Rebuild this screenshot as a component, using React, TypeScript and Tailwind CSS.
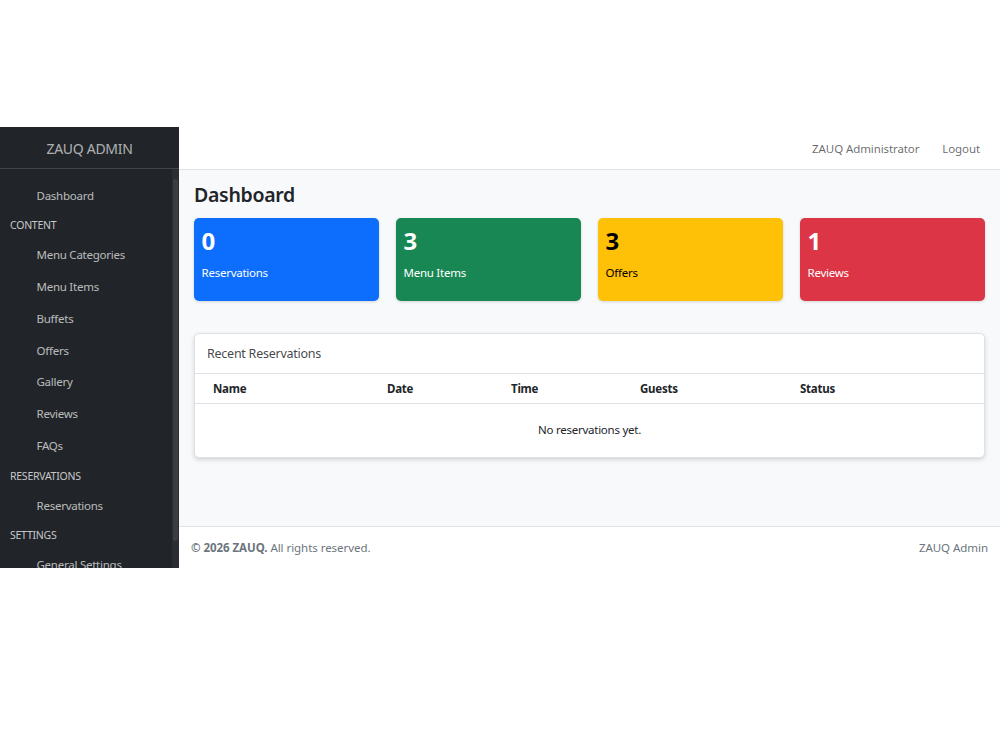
const font = "font-['Noto_Sans','Open_Sans',sans-serif]";

const stats = [
  { value: '0', label: 'Reservations', bg: 'bg-[#0d6efd]', text: 'text-white' },
  { value: '3', label: 'Menu Items', bg: 'bg-[#198754]', text: 'text-white' },
  { value: '3', label: 'Offers', bg: 'bg-[#ffc107]', text: 'text-black' },
  { value: '1', label: 'Reviews', bg: 'bg-[#dc3545]', text: 'text-white' },
];

function NavItem({ label }: { label: string }) {
  return <a className="block h-[31.75px] pl-[36.5px] leading-[31.75px] text-[11.5px] text-[#ffffffb3] whitespace-nowrap">{label}</a>;
}

function NavHeading({ label }: { label: string }) {
  return <div className="h-[28px] pl-[10px] leading-[28px] text-[10.5px] text-[#ffffffbf] uppercase whitespace-nowrap">{label}</div>;
}

function Sidebar() {
  return (
    <aside className="w-[179px] shrink-0 bg-[#212529] flex flex-col">
      <div className="h-[42px] shrink-0 border-b border-[#ffffff26] flex items-center justify-center pt-[2px] text-[14px] tracking-[-0.3px] text-[#ffffffa6]">
        ZAUQ ADMIN
      </div>
      <div className="flex-1 min-h-0 flex">
        <nav className="flex-1 overflow-hidden pt-[10.5px]">
          <NavItem label="Dashboard" />
          <NavHeading label="Content" />
          <NavItem label="Menu Categories" />
          <NavItem label="Menu Items" />
          <NavItem label="Buffets" />
          <NavItem label="Offers" />
          <NavItem label="Gallery" />
          <NavItem label="Reviews" />
          <NavItem label="FAQs" />
          <NavHeading label="Reservations" />
          <NavItem label="Reservations" />
          <NavHeading label="Settings" />
          <NavItem label="General Settings" />
        </nav>
        <div className="w-[7px] shrink-0 bg-[#2a2e33] py-[10px]">
          <div className="h-[362px] w-[5px] mx-auto rounded-full bg-[#3a3e43]" />
        </div>
      </div>
    </aside>
  );
}

function ReservationsCard() {
  return (
    <div className="mt-[32px] bg-white border border-[#dee2e6] rounded-[5px] shadow-[0_2px_4px_rgba(0,0,0,0.15)]">
      <div className="h-[40px] flex items-center px-[12px] pt-[2px] text-[12.5px] text-[#212529d9] border-b border-[#dee2e6]">
        Recent Reservations
      </div>
      <table className="w-full table-fixed text-[11.5px] text-[#212529]">
        <thead>
          <tr className="h-[29px] border-b border-[#dee2e6] font-bold text-left">
            <th className="pl-[18px] w-[192px]">Name</th>
            <th className="w-[124px]">Date</th>
            <th className="w-[129px]">Time</th>
            <th className="w-[160px]">Guests</th>
            <th>Status</th>
          </tr>
        </thead>
        <tbody>
          <tr className="h-[54px]">
            <td colSpan={5} className="pb-[1px] text-center">No reservations yet.</td>
          </tr>
        </tbody>
      </table>
    </div>
  );
}

export default function App() {
  return (
    <div className={`min-h-[750px] bg-white pt-[127px] tracking-[-0.25px] ${font}`}>
      <div className="h-[441px] flex overflow-hidden">
        <Sidebar />
        <div className="flex-1 min-w-0 flex flex-col bg-[#f8f9fa]">
          <header className="h-[43px] shrink-0 bg-white border-b border-[#dee2e6] flex items-center justify-end gap-[23px] pr-[20px] pt-[1px] text-[11.5px] tracking-[-0.1px] text-[#00000099]">
            <span>ZAUQ Administrator</span>
            <span>Logout</span>
          </header>
          <main className="flex-1 min-h-0 px-[15px] pt-[12px]">
            <h1 className="h-[36px] text-[19.5px] leading-[25px] font-semibold tracking-[-0.3px] text-[#212529]">Dashboard</h1>
            <div className="grid grid-cols-4 gap-[17px]">
              {stats.map(s => (
                <div key={s.label} className={`h-[83px] rounded-[5px] px-[7.5px] pt-[6px] shadow-[0_1px_3px_rgba(0,0,0,0.15)] ${s.bg} ${s.text}`}>
                  <div className="text-[24px] leading-[34px] font-bold">{s.value}</div>
                  <div className="mt-[7px] text-[11.5px] leading-[16px]">{s.label}</div>
                </div>
              ))}
            </div>
            <ReservationsCard />
          </main>
          <footer className="h-[42px] shrink-0 bg-white border-t border-[#dee2e6] flex items-center justify-between px-[12px] text-[11.5px] tracking-[-0.05px] text-[#6c757d]">
            <span><strong className="font-bold">© 2026 ZAUQ.</strong> All rights reserved.</span>
            <span>ZAUQ Admin</span>
          </footer>
        </div>
      </div>
    </div>
  );
}
